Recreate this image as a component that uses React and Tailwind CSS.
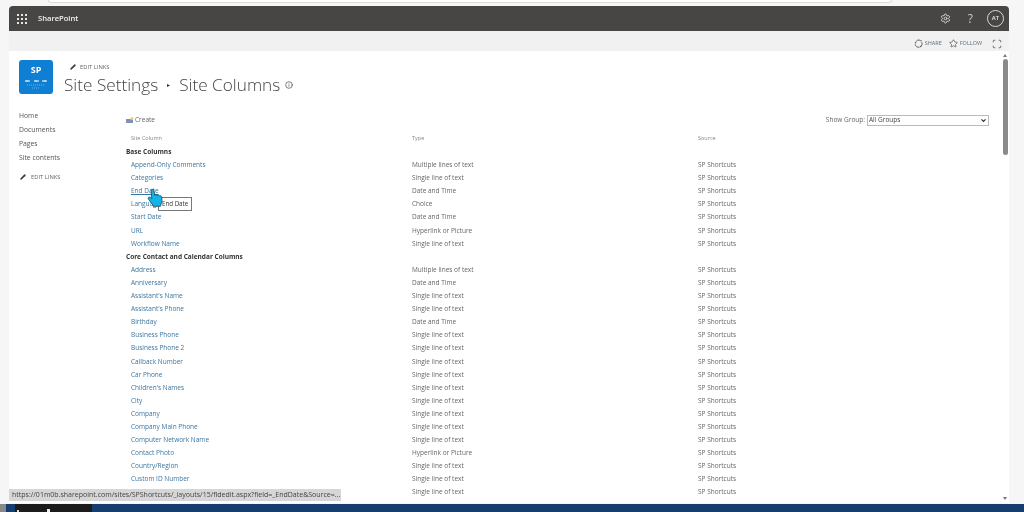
import { Settings, Pencil, Star, Scan, Info, ChevronDown } from 'lucide-react'

const COLUMN_GROUPS = [
  {
    title: 'Base Columns',
    rows: [
      ['Append-Only Comments', 'Multiple lines of text'],
      ['Categories', 'Single line of text'],
      ['End Date', 'Date and Time'],
      ['Language', 'Choice'],
      ['Start Date', 'Date and Time'],
      ['URL', 'Hyperlink or Picture'],
      ['Workflow Name', 'Single line of text'],
    ],
  },
  {
    title: 'Core Contact and Calendar Columns',
    rows: [
      ['Address', 'Multiple lines of text'],
      ['Anniversary', 'Date and Time'],
      ["Assistant's Name", 'Single line of text'],
      ["Assistant's Phone", 'Single line of text'],
      ['Birthday', 'Date and Time'],
      ['Business Phone', 'Single line of text'],
      ['Business Phone 2', 'Single line of text'],
      ['Callback Number', 'Single line of text'],
      ['Car Phone', 'Single line of text'],
      ["Children's Names", 'Single line of text'],
      ['City', 'Single line of text'],
      ['Company', 'Single line of text'],
      ['Company Main Phone', 'Single line of text'],
      ['Computer Network Name', 'Single line of text'],
      ['Contact Photo', 'Hyperlink or Picture'],
      ['Country/Region', 'Single line of text'],
      ['Custom ID Number', 'Single line of text'],
      // name sits behind the status bubble in the picture
      ['', 'Single line of text'],
    ],
  },
]

const NAV_LINKS = ['Home', 'Documents', 'Pages', 'Site contents']

function Waffle() {
  return (
    <div className="grid grid-cols-3 gap-[2px]">
      {Array.from({ length: 9 }).map((_, i) => (
        <span key={i} className="w-[2px] h-[2px] bg-[#e6e6e4]" />
      ))}
    </div>
  )
}

function ShareIcon() {
  return (
    <svg width="9" height="9" viewBox="0 0 12 12" fill="none" stroke="#555" strokeWidth="1.2">
      <path d="M2.5 3.5A4.6 4.6 0 0 1 8 1.6M10.4 4.4a4.6 4.6 0 0 1-.8 5.1M7.5 10.8A4.6 4.6 0 0 1 1.5 7" />
      <circle cx="2" cy="5" r="1" fill="#555" stroke="none" />
      <circle cx="9.3" cy="2.4" r="1" fill="#555" stroke="none" />
      <circle cx="9" cy="10" r="1" fill="#555" stroke="none" />
    </svg>
  )
}

function SiteLogo() {
  return (
    <div className="w-[34px] h-[34px] shrink-0 rounded-[3px] bg-[#0f7fd4] flex flex-col items-center pt-[3px]">
      <span className="text-[9px] leading-[13px] font-bold text-white">SP</span>
      <svg width="24" height="10" viewBox="0 0 24 10" className="mt-[3px]">
        <path d="M1 2h5M10 2h5M18 2h5" stroke="#fff" strokeWidth="1" />
        <path d="M3 1v2M12 1v2M21 1v2" stroke="#fff" strokeWidth="0.7" />
        <path d="M3 6h18M8 9h8" stroke="#9fd0f2" strokeWidth="0.7" strokeDasharray="1 1" />
      </svg>
    </div>
  )
}

function HandCursor() {
  return (
    <svg width="16" height="20" viewBox="0 0 17 20" className="absolute left-[147px] top-[188px]">
      <path
        d="M5 1.2c1-.8 2.2-.2 2.4 1L8.3 7l1-.3c.7-.2 1.2 0 1.5.5l.9-.2c.7-.1 1.2.1 1.5.6l.8-.1c1 0 1.6.7 1.7 1.6l.2 3.8c0 1.5-.3 2.6-1 3.6l-.6 2.3H6.6l-1-2.2-4-5.2c-.6-.9-.4-1.8.3-2.2.7-.4 1.5-.2 2.1.4l1.1 1.1-.8-8.2c-.1-.5.1-1 .7-1.5z"
        fill="#12b5e6"
        stroke="#123a4a"
        strokeWidth="0.8"
      />
    </svg>
  )
}

export default function App() {
  return (
    <div className="relative w-[1024px] h-[512px] overflow-hidden bg-[#f6f6f6] flex flex-col blur-[0.35px] font-['Open_Sans',sans-serif]">
      <div className="h-[6px] shrink-0 pl-[48px] pr-[132px]">
        <div className="h-[3px] bg-white border-b border-x border-[#dcdcdc] rounded-b-md" />
      </div>

      <div className="flex-1 min-h-0 ml-[9px] mr-[15px] flex flex-col overflow-hidden">
        {/* suite bar */}
        <div className="h-[25px] shrink-0 bg-[#484644] rounded-t-[4px] flex items-center pl-[8px] pr-[5px]">
          <Waffle />
          <span className="ml-[11px] text-[7.6px] font-semibold text-[#f2f2f2]">SharePoint</span>
          <Settings className="ml-auto w-[11px] h-[11px] text-[#d5d5d5]" />
          <span className="ml-[17px] text-[12px] leading-none text-[#c9c9c9]">?</span>
          <div className="ml-[14px] w-[17px] h-[17px] rounded-full border border-[#d8d8d8] flex items-center justify-center text-[6px] font-semibold text-[#e8e8e8]">
            AT
          </div>
        </div>

        {/* share / follow strip */}
        <div className="h-[20px] shrink-0 bg-[#f1f1f1] flex items-center justify-end gap-[6px] pr-[7px] pt-[5px] text-[5.5px] text-[#5f6f78]">
          <ShareIcon />
          <span className="-ml-[4px]">SHARE</span>
          <Star className="ml-[1px] w-[9px] h-[9px] text-[#555]" />
          <span className="-ml-[4px]">FOLLOW</span>
          <Scan className="ml-[4px] w-[10px] h-[10px] text-[#555]" />
        </div>

        <div className="flex-1 min-h-0 bg-white flex overflow-hidden">
          <div className="flex-1 min-w-0 pl-[10px] overflow-hidden">
            {/* page title */}
            <div className="h-[58px] flex items-start pt-[9px]">
              <SiteLogo />
              <div className="ml-[11px]">
                <div className="h-[14px] flex items-center pl-[6px] text-[5.8px] text-[#666]">
                  <Pencil className="w-[6px] h-[6px] mr-[4px] text-[#444] fill-[#444]" />
                  EDIT LINKS
                </div>
                <div className="-mt-[1px] flex items-center text-[17.2px] leading-[24px] font-light text-[#444]">
                  Site Settings
                  <span className="mx-[9px] text-[6px] text-[#333]">▸</span>
                  Site Columns
                  <Info className="ml-[5px] w-[8px] h-[8px] text-[#444]" />
                </div>
              </div>
            </div>

            <div className="flex">
              {/* quick launch */}
              <nav className="w-[106px] shrink-0 text-[6.8px] text-[#555]">
                {NAV_LINKS.map((link) => (
                  <div key={link} className="h-[14px] leading-[14px]">{link}</div>
                ))}
                <div className="mt-[8px] flex items-center pl-[1px] text-[5.8px] text-[#666]">
                  <Pencil className="w-[6px] h-[6px] mr-[5px] text-[#444] fill-[#444]" />
                  EDIT LINKS
                </div>
              </nav>

              {/* columns table */}
              <div className="flex-1 min-w-0 pl-[1px] pt-[5px] text-[6.5px]">
                <div className="h-[12px] flex items-center justify-between">
                  <div className="flex items-center text-[#666]">
                    <svg width="8" height="7" viewBox="0 0 8 7" className="mr-[1px]">
                      <rect x="0" y="2" width="7" height="4" fill="#7f93b5" />
                      <circle cx="6" cy="1.5" r="1.5" fill="#e8d468" />
                    </svg>
                    Create
                  </div>
                  <div className="flex items-center mr-[12px] text-[#666]">
                    Show Group:
                    <div className="ml-[2px] w-[122px] h-[11px] border border-[#bbb] flex items-center justify-between px-[1px] text-[#444]">
                      All Groups
                      <ChevronDown className="w-[7px] h-[7px] text-[#222]" strokeWidth={3.5} />
                    </div>
                  </div>
                </div>

                <div className="grid grid-cols-[281px_286px_1fr] h-[12px] mt-[6px] mb-[1px] pl-[5px] items-center text-[5.5px] text-[#888]">
                  <span>Site Column</span>
                  <span>Type</span>
                  <span>Source</span>
                </div>

                {COLUMN_GROUPS.map((group) => (
                  <div key={group.title}>
                    <div className="h-[13.1px] leading-[13px] font-bold text-[#333]">{group.title}</div>
                    {group.rows.map(([name, type], index) => (
                      <div key={index} className="grid grid-cols-[281px_286px_1fr] h-[13.1px] leading-[13px] pl-[5px] text-[#666]">
                        <span className={name === 'End Date' ? 'text-[#3b75a0] underline' : 'text-[#3b75a0]'}>{name}</span>
                        <span>{type}</span>
                        <span>SP Shortcuts</span>
                      </div>
                    ))}
                  </div>
                ))}
              </div>
            </div>
          </div>

          {/* scrollbar */}
          <div className="w-[8px] shrink-0 flex flex-col items-center">
            <span className="mt-[3px] w-0 h-0 border-x-[2px] border-x-transparent border-b-[3px] border-b-[#777]" />
            <div className="mt-[2px] w-[5px] h-[96px] rounded-full bg-[#8a8a8a]" />
            <span className="mt-auto mb-[3px] w-0 h-0 border-x-[2px] border-x-transparent border-t-[3px] border-t-[#777]" />
          </div>
        </div>
      </div>

      {/* windows taskbar */}
      <div className="h-[8px] shrink-0 mt-[1px] flex bg-[#153e6e]">
        <div className="w-[6px] bg-[#888]" />
        <div className="ml-[9px] w-[77px] bg-[#1c1c1c] flex items-end gap-[28px] pl-[2px]">
          <span className="w-[2px] h-[2px] bg-[#ddd]" />
          <span className="w-[3px] h-[3px] bg-[#eee]" />
        </div>
      </div>

      {/* tooltip on hover */}
      <div className="absolute left-[158px] top-[197px] h-[14px] px-[3px] bg-white border border-[#777] text-[6.2px] leading-[12px] text-[#333]">
        End Date
      </div>
      <HandCursor />

      {/* link status bubble */}
      <div className="absolute left-[9px] top-[489px] w-[332px] h-[12px] bg-[#d6d6d6] pl-[3px] text-[7px] leading-[12px] text-[#444] whitespace-nowrap overflow-hidden">
        https://01m0b.sharepoint.com/sites/SPShortcuts/_layouts/15/fldedit.aspx?field=_EndDate&Source=...
      </div>
    </div>
  )
}
